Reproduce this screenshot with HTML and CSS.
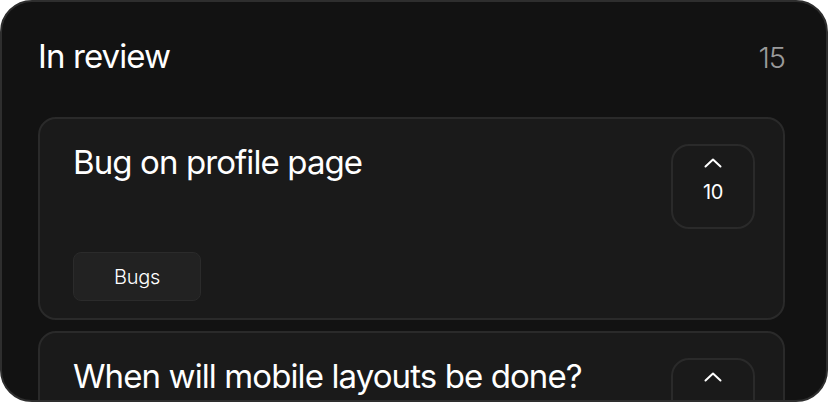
FILE: index.html
```html
<!DOCTYPE html>
<html lang="en">
<head>
    <meta charset="UTF-8">
    <meta name="viewport" content="width=device-width, initial-scale=1.0">
    <title>In review</title>
    <link rel="stylesheet" href="styles.css">
</head>
<body>
    <div class="column">
        <div class="column-header">
            <h2>In review</h2>
            <span class="count">15</span>
        </div>
        <div class="card-list">
            <div class="card">
                <div class="card-top">
                    <h3>Bug on profile page</h3>
                    <button class="vote">
                        <svg width="18" height="10" viewBox="0 0 18 10"><path d="M1.5 8.5 L9 1.5 L16.5 8.5" fill="none" stroke="#fff" stroke-width="2" stroke-linecap="round" stroke-linejoin="round"/></svg>
                        <span>10</span>
                    </button>
                </div>
                <div class="tags">
                    <span class="tag">Bugs</span>
                </div>
            </div>
            <div class="card">
                <div class="card-top">
                    <h3>When will mobile layouts be done?</h3>
                    <button class="vote">
                        <svg width="18" height="10" viewBox="0 0 18 10"><path d="M1.5 8.5 L9 1.5 L16.5 8.5" fill="none" stroke="#fff" stroke-width="2" stroke-linecap="round" stroke-linejoin="round"/></svg>
                    </button>
                </div>
            </div>
        </div>
    </div>
</body>
</html>
```

FILE: styles.css
```css
body {
    margin: 0;
    background-color: #fff;
    font-family: Inter, "Noto Sans", sans-serif;
    color: #fff;
}
.column {
    height: 402px;
    box-sizing: border-box;
    background-color: #121212;
    border: 2px solid #2e2e2e;
    border-radius: 32px;
    padding: 30px 41px 0 36px;
    overflow: hidden;
}
.column-header {
    display: flex;
    justify-content: space-between;
    align-items: baseline;
    margin-bottom: 37px;
}
.column-header h2 {
    margin: 0;
    font-size: 33px;
    font-weight: 400;
    line-height: 48px;
    letter-spacing: -0.9px;
}
.count {
    font-size: 29px;
    font-weight: 300;
    color: #9a9a9a;
    letter-spacing: -1px;
}
.card-list {
    display: flex;
    flex-direction: column;
    gap: 11px;
}
.card {
    background-color: #1a1a1a;
    border: 2px solid #2a2a2a;
    border-radius: 18px;
    padding: 25px 28px 17px 33px;
}
.card-top {
    display: flex;
    justify-content: space-between;
    align-items: flex-start;
}
.card-top h3 {
    margin: 0;
    font-size: 33px;
    font-weight: 400;
    line-height: 36px;
    letter-spacing: -0.9px;
}
.vote {
    width: 84px;
    height: 85px;
    box-sizing: border-box;
    background: none;
    border: 2px solid #2a2a2a;
    border-radius: 18px;
    color: #fff;
    font-family: inherit;
    font-size: 20px;
    line-height: 24px;
    display: flex;
    flex-direction: column;
    align-items: center;
    padding: 12px 0 0;
}
.vote svg {
    display: block;
}
.vote span {
    margin-top: 12px;
    letter-spacing: -0.5px;
}
.tags {
    margin-top: 23px;
    display: flex;
    gap: 10px;
}
.tag {
    display: inline-flex;
    align-items: center;
    justify-content: center;
    width: 128px;
    height: 49px;
    box-sizing: border-box;
    background-color: #222;
    border: 1px solid #2b2b2b;
    border-radius: 8px;
    font-size: 20px;
    font-weight: 300;
    letter-spacing: -0.3px;
}
```
